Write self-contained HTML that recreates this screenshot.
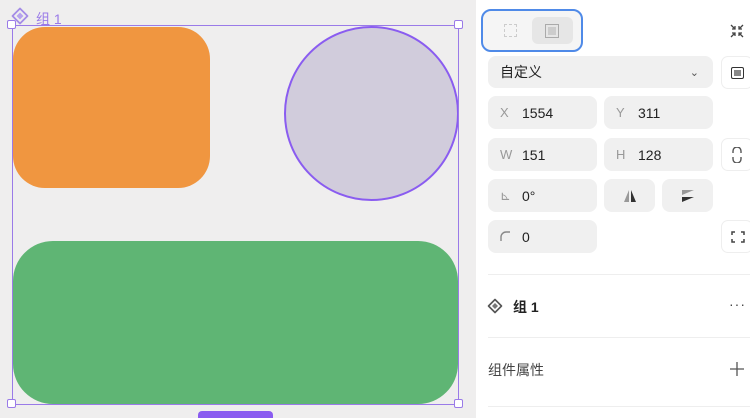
<!DOCTYPE html>
<html><head><meta charset="utf-8"><style>
*{margin:0;padding:0;box-sizing:border-box}
html,body{width:750px;height:418px;overflow:hidden}
body{background:#efeeee;position:relative;font-family:"Liberation Sans","Noto Sans CJK SC",sans-serif}
.a{position:absolute}
.panel{left:476px;top:0;width:274px;height:418px;background:#fff}
.f{position:absolute;background:#f0f0f0;border-radius:8px;height:33px;font-size:14px;color:#222;display:flex;align-items:center;padding-left:12px}
.f .l{color:#999;width:22px;font-size:13px}
.sb{position:absolute;border:1px solid #eee;border-radius:7px;background:#fff;width:32px;height:33px;left:721px}
.h{position:absolute;width:9px;height:9px;background:#fff;border:1.5px solid #9a7ae8;border-radius:2px}
</style></head><body>
<svg class="a" style="left:11px;top:7px" width="18" height="18" viewBox="0 0 18 18"><path d="M9 1.5L16.5 9L9 16.5L1.5 9Z" fill="none" stroke="#a48be6" stroke-width="1.8" stroke-linejoin="round"/><path d="M9 5.5L12.5 9L9 12.5L5.5 9Z" fill="#b6a3ee"/></svg>
<div class="a" style="left:36px;top:9px;font-size:14px;color:#9a7ae8">组 1</div>
<div class="a" style="left:13px;top:27px;width:197px;height:161px;background:#f09640;border-radius:32px"></div>
<div class="a" style="left:284px;top:26px;width:175px;height:175px;border-radius:50%;background:#d1ccdc;border:2px solid #8a5cf0"></div>
<div class="a" style="left:13px;top:241px;width:445px;height:163px;background:#5fb574;border-radius:40px"></div>
<div class="a" style="left:12px;top:25px;width:447px;height:380px;border:1px solid #9a7ae8"></div>
<div class="h" style="left:7px;top:20px"></div><div class="h" style="left:454px;top:20px"></div>
<div class="h" style="left:7px;top:399px"></div><div class="h" style="left:454px;top:399px"></div>
<div class="a" style="left:198px;top:411px;width:75px;height:12px;background:#8a5cf0;border-radius:4px"></div>
<div class="a panel"></div>
<div class="a" style="left:481px;top:9px;width:102px;height:43px;border:2px solid #4f8ae8;border-radius:10px;background:#f5f5f5"></div>
<div class="a" style="left:504px;top:24px;width:13px;height:13px;border:1px dashed #ccc"></div>
<div class="a" style="left:532px;top:17px;width:41px;height:27px;background:#e6e6e6;border-radius:6px"></div>
<div class="a" style="left:545px;top:24px;width:14px;height:14px;border:1px solid #aaa;background:#ccc;box-shadow:inset 0 0 0 2px #e6e6e6"></div>
<svg class="a" style="left:730px;top:24px" width="14" height="14" viewBox="0 0 14 14" stroke="#444" stroke-width="1.3" fill="none"><path d="M1 1L5 5M5 2V5H2M13 1L9 5M9 2V5H12M1 13L5 9M2 9H5V12M13 13L9 9M12 9H9V12"/></svg>
<div class="f" style="left:488px;top:56px;width:225px;height:32px">自定义<span style="position:absolute;right:14px;font-size:11px;color:#555">⌄</span></div>
<div class="sb" style="top:56px"><div style="margin:10px 9px;width:13px;height:12px;border:1.5px solid #333;background:#888;border-radius:2px;box-shadow:inset 0 0 0 2px #fff"></div></div>
<div class="f" style="left:488px;top:96px;width:109px"><span class="l">X</span>1554</div>
<div class="f" style="left:604px;top:96px;width:109px"><span class="l">Y</span>311</div>
<div class="f" style="left:488px;top:138px;width:109px"><span class="l">W</span>151</div>
<div class="f" style="left:604px;top:138px;width:109px"><span class="l">H</span>128</div>
<div class="sb" style="top:138px"><svg style="margin:8px 10px" width="10" height="16" viewBox="0 0 10 16" fill="none" stroke="#555" stroke-width="1.4"><path d="M1 6V4A4 4 0 0 1 9 4V6M1 10V12A4 4 0 0 0 9 12V10"/></svg></div>
<div class="f" style="left:488px;top:179px;width:109px"><span class="l">⊾</span>0°</div>
<div class="f" style="left:604px;top:179px;width:51px;justify-content:center;padding:0"><svg width="16" height="14" viewBox="0 0 16 14"><path d="M7 1V13H2Z" fill="#999"/><path d="M9 1V13H14Z" fill="#333"/></svg></div>
<div class="f" style="left:662px;top:179px;width:51px;justify-content:center;padding:0"><svg width="14" height="14" viewBox="0 0 14 14"><path d="M1 1H13L1 6Z" fill="#999"/><path d="M1 8H13L1 13Z" fill="#333"/></svg></div>
<div class="f" style="left:488px;top:220px;width:109px"><span class="l"><svg width="10" height="10" viewBox="0 0 10 10" fill="none" stroke="#888" stroke-width="1.4"><path d="M1 10V6A5 5 0 0 1 6 1H10"/></svg></span>0</div>
<div class="sb" style="top:220px"><svg style="margin:10px 9px" width="14" height="12" viewBox="0 0 14 12" fill="none" stroke="#444" stroke-width="1.5"><path d="M1 4V1H4M10 1H13V4M13 8V11H10M4 11H1V8"/></svg></div>
<div class="a" style="left:488px;top:274px;width:262px;height:1px;background:#eee"></div>
<svg class="a" style="left:487px;top:298px" width="16" height="16" viewBox="0 0 16 16"><path d="M8 1.5L14.5 8L8 14.5L1.5 8Z" fill="none" stroke="#555" stroke-width="1.6" stroke-linejoin="round"/><path d="M8 5L11 8L8 11L5 8Z" fill="#777"/></svg>
<div class="a" style="left:513px;top:297px;font-size:14px;color:#222;font-weight:bold">组 1</div>
<div class="a" style="left:729px;top:296px;font-size:14px;color:#444;letter-spacing:1px">···</div>
<div class="a" style="left:488px;top:337px;width:262px;height:1px;background:#eee"></div>
<div class="a" style="left:488px;top:360px;font-size:14px;color:#444">组件属性</div>
<svg class="a" style="left:730px;top:362px" width="14" height="14" viewBox="0 0 14 14" stroke="#555" stroke-width="1.3"><path d="M7 0V14M0 7H14"/></svg>
<div class="a" style="left:488px;top:406px;width:262px;height:1px;background:#eee"></div>
</body></html>
